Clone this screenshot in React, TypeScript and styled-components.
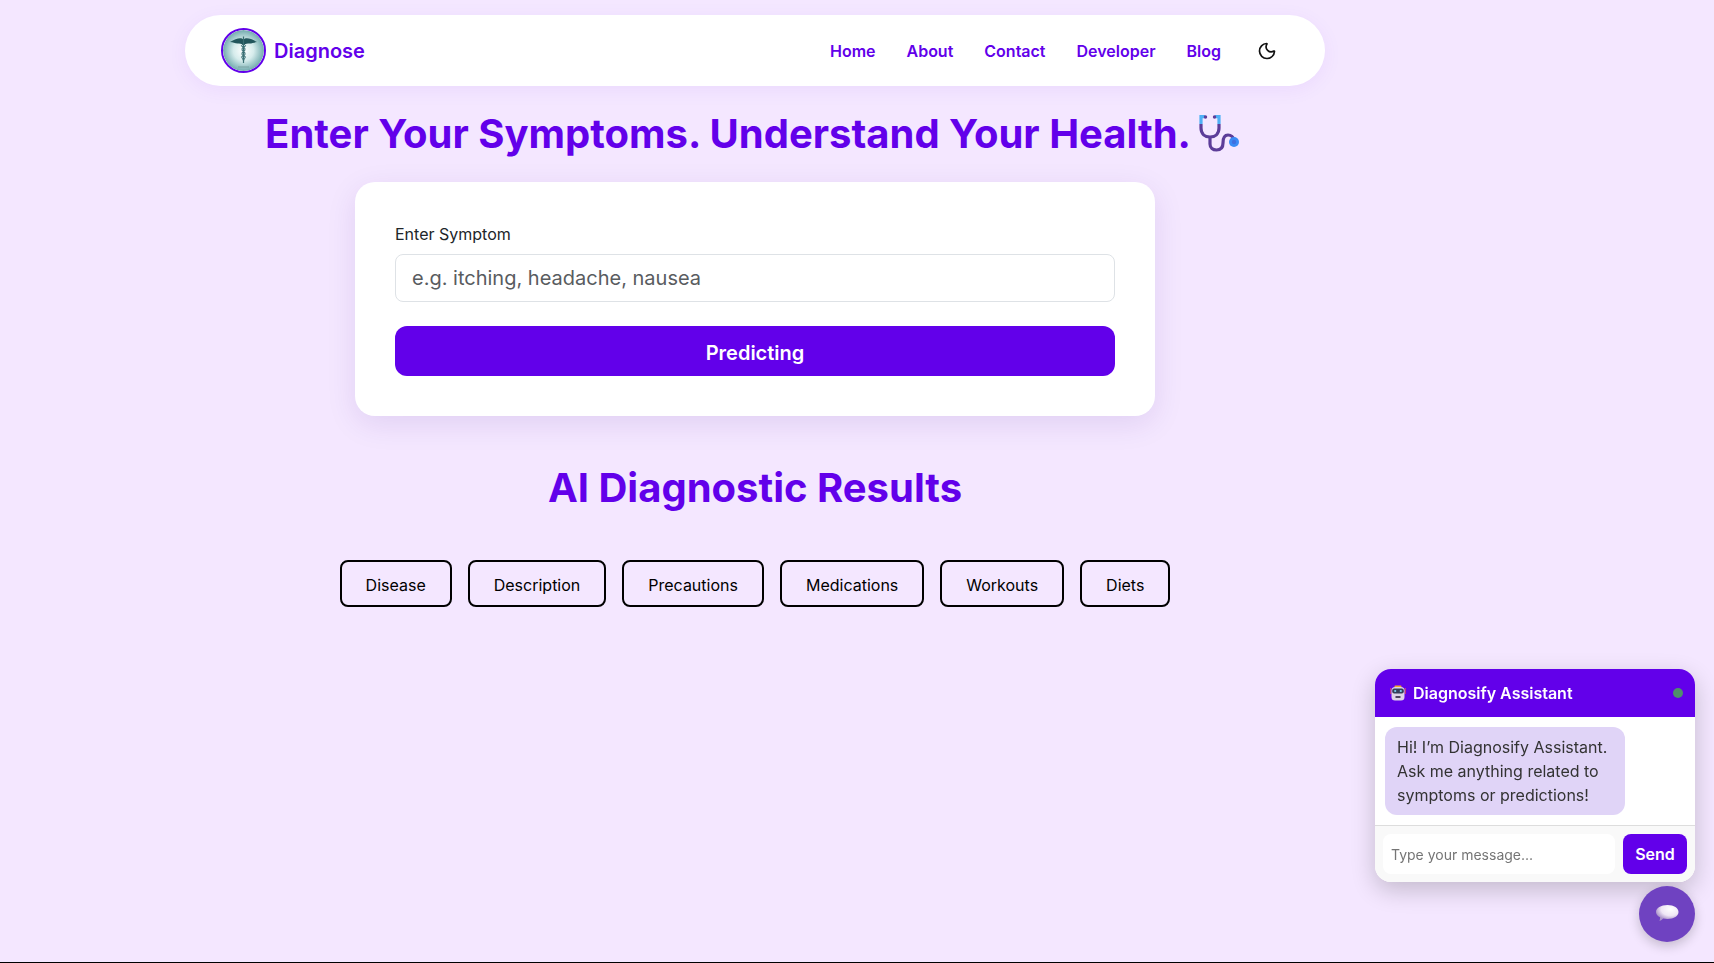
import { createGlobalStyle } from "styled-components";
import styled from "styled-components";
import { Moon } from "lucide-react";

const GlobalStyle = createGlobalStyle`
  html, body {
    margin: 0;
    padding: 0;
    background: #f4e7ff;
    font-family: Inter, "Liberation Sans", sans-serif;
  }
  * {
    box-sizing: border-box;
  }
`;

const navLinks = ["Home", "About", "Contact", "Developer", "Blog"];
const tabs = ["Disease", "Description", "Precautions", "Medications", "Workouts", "Diets"];

const LogoMark = () => (
  <LogoCircle>
    <svg width="41" height="41" viewBox="0 0 41 41">
      <defs>
        <radialGradient id="logoBg" cx="50%" cy="50%" r="55%">
          <stop offset="0%" stopColor="#ffffff" />
          <stop offset="45%" stopColor="#d6ecec" />
          <stop offset="100%" stopColor="#5f9ea2" />
        </radialGradient>
      </defs>
      <circle cx="20.5" cy="20.5" r="20.5" fill="url(#logoBg)" />
      <path d="M20.5 9.5 C18 7 13 8.5 7 12 C10 12.3 12 13.4 14.5 13.6 C16.5 13.8 18.5 13.6 19.5 15 H21.5 C22.5 13.6 24.5 13.8 26.5 13.6 C29 13.4 31 12.3 34 12 C28 8.5 23 7 20.5 9.5 Z" fill="#22565c" />
      <path d="M20.5 6.5 V33" stroke="#3b6f74" strokeWidth="1.2" />
      <path d="M18 15.5 C22 17.5 23.5 19.5 20.5 21.5 C17.5 23.5 19 25.5 22 26.5 C23 27.5 21 29 19.5 30" stroke="#3f7378" strokeWidth="1.1" fill="none" />
      <path d="M23 15.5 C19 17.5 17.5 19.5 20.5 21.5 C23.5 23.5 22 25.5 19 26.5 C18 27.5 20 29 21.5 30" stroke="#3f7378" strokeWidth="1.1" fill="none" />
      <path d="M15 37 H26" stroke="#7aa3a3" strokeWidth="1" />
    </svg>
  </LogoCircle>
);

const StethoscopeIcon = () => (
  <svg width="48" height="44" viewBox="3 0 48 44">
    <path d="M7 12 V16 C7 22 11 25 16 25 C21 25 25 22 25 16 V12" fill="none" stroke="#5c3d99" strokeWidth="3.2" />
    <path d="M16 25 V32 C16 36 19 38 22.5 38 C27 38 29 35 29 31 C29 26 31 23 34 23 C37 23 39.5 25 40 28" fill="none" stroke="#5c3d99" strokeWidth="3.2" />
    <path d="M11 4.6 H7 V12 M21 4.6 H25 V12" fill="none" stroke="#4fb0f5" strokeWidth="3.2" />
    <circle cx="11.5" cy="5" r="1.7" fill="#5c3d99" />
    <circle cx="20.5" cy="5" r="1.7" fill="#5c3d99" />
    <circle cx="40" cy="30" r="5" fill="#3a8bf5" />
    <circle cx="40" cy="30" r="2.2" fill="#3f6fe0" />
  </svg>
);

const RobotIcon = () => (
  <svg width="16" height="16" viewBox="0 0 16 16">
    <path d="M0.8 3 V9 M15.2 3 V9" stroke="#e0455f" strokeWidth="1.1" />
    <rect x="4.5" y="0.5" width="7" height="2" rx="0.8" fill="#f0a830" />
    <rect x="1.5" y="2" width="13" height="13.5" rx="3.5" fill="#ddd4e8" />
    <rect x="2.2" y="3.5" width="11.6" height="5" rx="2" fill="#35405c" />
    <circle cx="5.2" cy="6" r="1.1" fill="#7fd4f5" />
    <circle cx="10.8" cy="6" r="1.1" fill="#7fd4f5" />
    <rect x="5.5" y="11" width="5" height="2" fill="#4d4560" />
  </svg>
);

const BubbleIcon = () => (
  <svg width="24" height="20" viewBox="0 0 24 20">
    <defs>
      <radialGradient id="bubbleFill" cx="65%" cy="25%" r="70%">
        <stop offset="0%" stopColor="#ffffff" />
        <stop offset="60%" stopColor="#efe6f5" />
        <stop offset="100%" stopColor="#a992c9" />
      </radialGradient>
    </defs>
    <path d="M12.5 1 C19 1 23.5 4 23.5 8 C23.5 12 19 15 12.5 15 C11 15 9.5 14.8 8.2 14.5 C7.2 15.6 6 16.4 4.5 17 C5 15.6 5.2 14.4 5 13.3 C2.5 12 1 10.2 1 8 C1 4 6 1 12.5 1 Z" fill="url(#bubbleFill)" />
  </svg>
);

const App = () => {
  return (
    <Page>
      <GlobalStyle />
      <Main>
        <Navbar>
          <Brand>
            <LogoMark />
            <BrandName>Diagnose</BrandName>
          </Brand>
          <NavList>
            {navLinks.map((link) => (
              <NavLink key={link}>{link}</NavLink>
            ))}
            <ThemeToggle>
              <Moon size={20} strokeWidth={2} color="#111" />
            </ThemeToggle>
          </NavList>
        </Navbar>

        <Headline>
          Enter Your Symptoms. Understand Your Health.
          <StethoscopeIcon />
        </Headline>

        <FormCard>
          <FieldLabel>Enter Symptom</FieldLabel>
          <SymptomInput placeholder="e.g. itching, headache, nausea" />
          <PredictButton>Predicting</PredictButton>
        </FormCard>

        <ResultsTitle>AI Diagnostic Results</ResultsTitle>

        <TabRow>
          {tabs.map((tab) => (
            <TabButton key={tab}>{tab}</TabButton>
          ))}
        </TabRow>
      </Main>

      <ChatDock>
        <ChatWindow>
          <ChatHeader>
            <ChatTitle>
              <RobotIcon />
              Diagnosify Assistant
            </ChatTitle>
            <OnlineDot />
          </ChatHeader>
          <ChatBody>
            <BotBubble>
              Hi! I’m Diagnosify Assistant. Ask me anything related to symptoms or predictions!
            </BotBubble>
          </ChatBody>
          <ChatForm>
            <ChatInput placeholder="Type your message..." />
            <SendButton>Send</SendButton>
          </ChatForm>
        </ChatWindow>
        <ChatFab>
          <BubbleIcon />
        </ChatFab>
      </ChatDock>
    </Page>
  );
};

export default App;

const Page = styled.div`
  min-height: 963px;
  border-bottom: 1px solid #000;
  background: #f4e7ff;
`;

const Main = styled.main`
  width: 1510px;
  display: flex;
  flex-direction: column;
  align-items: center;
  padding-top: 15px;
`;

const Navbar = styled.nav`
  width: 1140px;
  height: 71px;
  padding: 0 48px 0 36px;
  display: flex;
  align-items: center;
  justify-content: space-between;
  background: #fff;
  border-radius: 36px;
  box-shadow: 0 4px 20px rgba(98, 0, 234, 0.06);
`;

const Brand = styled.div`
  display: flex;
  align-items: center;
  gap: 8px;
`;

const LogoCircle = styled.div`
  width: 45px;
  height: 45px;
  border-radius: 50%;
  border: 2px solid #6200ea;
  overflow: hidden;
  display: flex;
`;

const BrandName = styled.span`
  font-size: 20px;
  font-weight: 600;
  color: #6200ea;
`;

const NavList = styled.div`
  display: flex;
  align-items: center;
  gap: 31px;
`;

const NavLink = styled.a`
  font-size: 16px;
  font-weight: 600;
  color: #6200ea;
`;

const ThemeToggle = styled.span`
  display: flex;
  margin-left: 5px;
`;

const Headline = styled.h1`
  margin: 24px 0 24px;
  display: flex;
  align-items: center;
  gap: 6px;
  font-size: 40px;
  line-height: 48px;
  font-weight: 700;
  color: #6200ea;
`;

const FormCard = styled.section`
  width: 800px;
  height: 234px;
  padding: 40px;
  display: flex;
  flex-direction: column;
  background: #fff;
  border-radius: 20px;
  box-shadow: 0 8px 30px rgba(60, 0, 140, 0.1);
`;

const FieldLabel = styled.label`
  font-size: 16px;
  line-height: 24px;
  color: #212529;
  margin-bottom: 8px;
`;

const SymptomInput = styled.input`
  width: 100%;
  height: 48px;
  padding: 0 16px;
  font-family: inherit;
  font-size: 20px;
  background: #fff;
  border: 1px solid #dee2e6;
  border-radius: 8px;
  margin-bottom: 24px;
  &::placeholder {
    color: #595c5f;
  }
`;

const PredictButton = styled.button`
  width: 100%;
  height: 50px;
  padding: 3px 0 0;
  border: none;
  border-radius: 12px;
  background: #6200ea;
  color: #fff;
  font-family: inherit;
  font-size: 20px;
  font-weight: 600;
`;

const ResultsTitle = styled.h2`
  margin: 48px 0;
  font-size: 40px;
  line-height: 48px;
  font-weight: 700;
  color: #6200ea;
`;

const TabRow = styled.div`
  display: flex;
  gap: 16px;
`;

const TabButton = styled.button`
  height: 47px;
  padding: 2px 24px 0;
  background: transparent;
  border: 2px solid #000;
  border-radius: 8px;
  color: #000;
  font-family: inherit;
  font-size: 16px;
`;

const ChatDock = styled.aside`
  position: fixed;
  right: 19px;
  bottom: 21px;
  display: flex;
  flex-direction: column;
  align-items: flex-end;
  gap: 4px;
`;

const ChatWindow = styled.div`
  width: 320px;
  height: 213px;
  display: flex;
  flex-direction: column;
  border-radius: 16px;
  overflow: hidden;
  background: #fff;
  box-shadow: 0 8px 24px rgba(0, 0, 0, 0.2);
`;

const ChatHeader = styled.header`
  height: 48px;
  padding: 0 12px 0 15px;
  display: flex;
  align-items: center;
  justify-content: space-between;
  background: #6200ea;
`;

const ChatTitle = styled.div`
  display: flex;
  align-items: center;
  gap: 7px;
  font-size: 16px;
  font-weight: 600;
  color: #fff;
`;

const OnlineDot = styled.span`
  width: 10px;
  height: 10px;
  border-radius: 50%;
  background: #4f8f6b;
`;

const ChatBody = styled.div`
  flex: 1;
  padding: 10px;
`;

const BotBubble = styled.div`
  width: 240px;
  height: 88px;
  padding: 8px 12px;
  background: #e0d4f7;
  border-radius: 12px;
  font-size: 16px;
  line-height: 24px;
  color: #333;
`;

const ChatForm = styled.form`
  height: 57px;
  padding: 8px;
  display: flex;
  gap: 8px;
  background: #f9f9f9;
  border-top: 1px solid #ddd;
`;

const ChatInput = styled.input`
  flex: 1;
  min-width: 0;
  height: 40px;
  padding: 0 8px;
  background: #fff;
  border: none;
  border-radius: 8px;
  font-family: inherit;
  font-size: 14px;
  &::placeholder {
    color: #757575;
  }
`;

const SendButton = styled.button`
  width: 64px;
  height: 40px;
  border: none;
  border-radius: 8px;
  background: #6200ea;
  color: #fff;
  font-family: inherit;
  font-size: 16px;
  font-weight: 600;
`;

const ChatFab = styled.button`
  width: 56px;
  height: 56px;
  border: none;
  border-radius: 50%;
  background: #6f42c1;
  display: flex;
  align-items: center;
  justify-content: center;
  box-shadow: 0 4px 12px rgba(0, 0, 0, 0.2);
`;
